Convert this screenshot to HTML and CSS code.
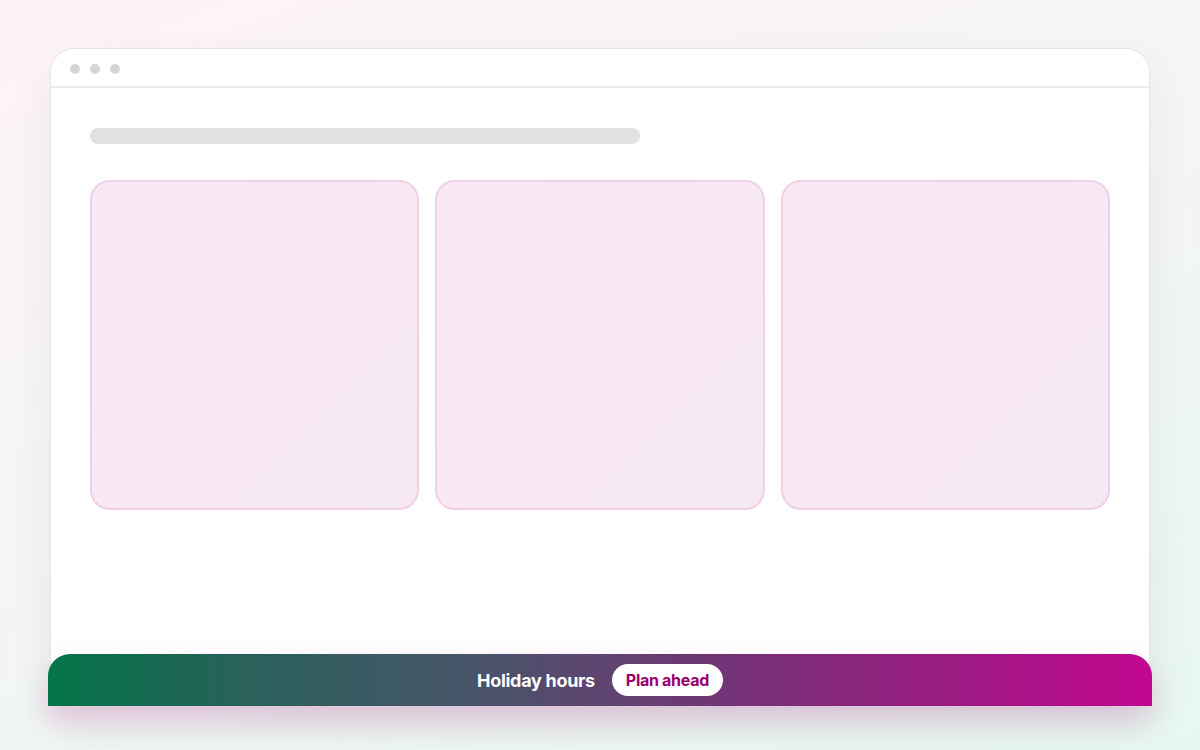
FILE: index.html
```html
<!DOCTYPE html>
<html lang="en">
<head>
  <meta charset="UTF-8" />
  <meta name="viewport" content="width=device-width, initial-scale=1.0"/>
  <title>Holiday hours</title>
  <link rel="stylesheet" href="styles.css">
</head>
<body>
  <div class="browser">
    <div class="titlebar">
      <span class="dot"></span>
      <span class="dot"></span>
      <span class="dot"></span>
    </div>

    <div class="content">
      <div class="skeleton-line"></div>
      <div class="cards">
        <div class="card"></div>
        <div class="card"></div>
        <div class="card"></div>
      </div>
    </div>

    <div class="banner">
      <span class="banner-title">Holiday hours</span>
      <a class="banner-pill" href="#">Plan ahead</a>
    </div>
  </div>
</body>
</html>
```

FILE: styles.css
```css
html, body {
  height: 100%;
}

body {
  margin: 0;
  padding: 48px 50px 44px;
  box-sizing: border-box;
  font-family: Inter, 'Noto Sans', sans-serif;
  background: linear-gradient(160deg, #fdf3f7 0%, #f5f5f5 45%, #e7f7f0 100%);
  overflow: hidden;
}

.browser {
  height: 100%;
  display: flex;
  flex-direction: column;
  background-color: #ffffff;
  border: 1px solid #e6e6e6;
  border-bottom: none;
  border-radius: 24px 24px 0 0;
  box-shadow: 0 20px 50px rgba(0, 0, 0, 0.06);
  box-sizing: border-box;
}

.titlebar {
  height: 39px;
  display: flex;
  align-items: center;
  gap: 10px;
  padding: 3px 0 0 19px;
  border-bottom: 2px solid #ebebeb;
  box-sizing: border-box;
}

.dot {
  width: 10px;
  height: 10px;
  border-radius: 50%;
  background-color: #d6d6d6;
}

.content {
  flex: 1;
  padding: 40px 39px 0;
}

.skeleton-line {
  width: 550px;
  height: 16px;
  border-radius: 8px;
  background-color: #e1e1e1;
  margin-bottom: 36px;
}

.cards {
  display: grid;
  grid-template-columns: repeat(3, 1fr);
  gap: 16px;
}

.card {
  height: 330px;
  box-sizing: border-box;
  border: 2px solid #f0cfe8;
  border-radius: 20px;
  background: linear-gradient(135deg, #f9e9f5, #f6e8f2);
}

.banner {
  height: 52px;
  margin: 0 -3px;
  display: flex;
  align-items: center;
  justify-content: center;
  gap: 17px;
  border-radius: 22px 22px 0 0;
  background: linear-gradient(90deg, #057549 0%, #2d5f5c 20%, #475569 38%, #7a2f78 65%, #c2078f 100%);
  box-shadow: 0 14px 30px rgba(194, 7, 143, 0.18);
}

.banner-title {
  color: #ffffff;
  font-size: 18px;
  font-weight: 700;
  letter-spacing: -0.3px;
}

.banner-pill {
  display: inline-block;
  padding: 6px 14px;
  border-radius: 16px;
  background-color: #ffffff;
  color: #9b0070;
  font-size: 16px;
  font-weight: 700;
  letter-spacing: -0.3px;
  text-decoration: none;
  line-height: 20px;
}
```
